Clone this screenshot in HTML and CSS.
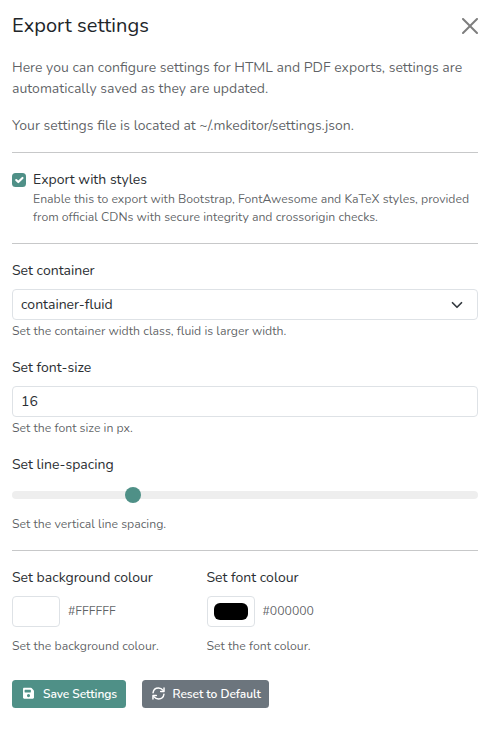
FILE: index.html
```
<!DOCTYPE html>
<html lang="en">
<head>
<meta charset="utf-8">
<title>Export settings</title>
<link rel="stylesheet" href="styles.css">
</head>
<body>
<main class="panel">
  <header class="head">
    <h5 class="title">Export settings</h5>
    <button class="close" aria-label="Close"><svg viewBox="0 0 16 16" width="16" height="16"><path d="M.293.293a1 1 0 0 1 1.414 0L8 6.586 14.293.293a1 1 0 1 1 1.414 1.414L9.414 8l6.293 6.293a1 1 0 0 1-1.414 1.414L8 9.414l-6.293 6.293a1 1 0 0 1-1.414-1.414L6.586 8 .293 1.707a1 1 0 0 1 0-1.414z"/></svg></button>
  </header>
  <p class="intro">Here you can configure settings for HTML and PDF exports, settings are automatically saved as they are updated.</p>
  <p class="intro">Your settings file is located at ~/.mkeditor/settings.json.</p>
  <hr>
  <div class="check">
    <span class="box"><svg viewBox="0 0 20 20" width="14" height="14"><path fill="none" stroke="#fff" stroke-linecap="round" stroke-linejoin="round" stroke-width="3" d="m6 10 3 3 6-6"/></svg></span>
    <div>
      <div class="label">Export with styles</div>
      <div class="help">Enable this to export with Bootstrap, FontAwesome and KaTeX styles, provided from official CDNs with secure integrity and crossorigin checks.</div>
    </div>
  </div>
  <hr>
  <section class="field">
    <div class="label">Set container</div>
    <div class="control">container-fluid<svg viewBox="0 0 16 16" width="14" height="12"><path fill="none" stroke="#343a40" stroke-linecap="round" stroke-linejoin="round" stroke-width="2.300" d="m2 5 6 6 6-6"/></svg></div>
    <div class="help">Set the container width class, fluid is larger width.</div>
  </section>
  <section class="field">
    <div class="label">Set font-size</div>
    <div class="control">16</div>
    <div class="help">Set the font size in px.</div>
  </section>
  <section class="field">
    <div class="label">Set line-spacing</div>
    <div class="range"><span class="thumb"></span></div>
    <div class="help">Set the vertical line spacing.</div>
  </section>
  <hr>
  <div class="colours">
    <section>
      <div class="label">Set background colour</div>
      <div class="pick"><span class="well"><span class="swatch white"></span></span><span class="help hex">#FFFFFF</span></div>
      <div class="help">Set the background colour.</div>
    </section>
    <section>
      <div class="label">Set font colour</div>
      <div class="pick"><span class="well"><span class="swatch black"></span></span><span class="help hex">#000000</span></div>
      <div class="help">Set the font colour.</div>
    </section>
  </div>
  <footer class="actions">
    <button class="btn save"><svg viewBox="0 0 448 512" width="11" height="12.500"><path fill="#fff" fill-rule="evenodd" d="M434 130l-84-84A48 48 0 0 0 316 32H48C21.500 32 0 53.500 0 80v352c0 26.500 21.500 48 48 48h352c26.500 0 48-21.500 48-48V164a48 48 0 0 0-14-34zM224 416a64 64 0 1 1 0-128 64 64 0 0 1 0 128zM320 128v80a16 16 0 0 1-16 16H80a16 16 0 0 1-16-16v-80a16 16 0 0 1 16-16h224a16 16 0 0 1 16 16z"/></svg>Save Settings</button>
    <button class="btn reset"><svg viewBox="0 0 512 512" width="13" height="13"><g fill="none" stroke="#fff" stroke-width="58" stroke-linecap="round" stroke-linejoin="round"><path d="M42 226C58 112 145 42 254 42c78 0 138 34 186 92M470 286c-16 114-103 184-212 184-78 0-138-34-186-92"/><path d="M474 42v132H342M38 470V338h132"/></g></svg>Reset to Default</button>
  </footer>
</main>
</body>
</html>
```
FILE: styles.css
```
* { box-sizing: border-box; }
body { margin: 0; background: #fff; color: #2a2e32; font: 400 14px/21px Nunito, "Nunito Sans", Lato, sans-serif; }
.panel { padding: 14px 15px 0 12px; }
svg { display: block; flex: none; }
.head { display: flex; justify-content: space-between; align-items: center; height: 24px; margin-bottom: 19px; }
.title { margin: 0; font-size: 20px; line-height: 24px; font-weight: 450; letter-spacing: .04px; color: #212529; }
.close { display: flex; padding: 0; border: 0; background: none; opacity: .5; }
.intro { margin: 0 0 16px; color: rgba(33, 37, 41, .72); }
hr { margin: 16px 0; border: 0; border-top: 1px solid #c7c8c9; }
.help { font-size: 12.25px; line-height: 18px; color: rgba(33, 37, 41, .72); }
.check { display: flex; gap: 7px; height: 58px; }
.box { flex: none; width: 14px; height: 14px; margin-top: 4px; border-radius: 3.5px; background: #4f9087; }
.field { margin-bottom: 17px; }
.control { display: flex; align-items: center; justify-content: space-between; height: 31px; margin: 8px 0 2px; padding: 0 13px 0 8px; border: 1px solid #dee2e6; border-radius: 4px; }
.range { display: flex; align-items: center; height: 8px; margin: 16px 0; padding-left: 113px; border-radius: 8px; background: #eee; }
.thumb { width: 16px; height: 16px; border-radius: 50%; background: #4f9087; }
.colours { display: grid; grid-template-columns: 194.5px 1fr; }
.pick { display: flex; align-items: center; gap: 8px; margin: 8px 0 10px; }
.well { display: flex; width: 48px; height: 31px; padding: 6px; border: 1px solid #dee2e6; border-radius: 4px; }
.swatch { flex: 1; border-radius: 6px; }
.hex { margin-top: -1px; }
.white { background: #fff; }
.black { background: #000; }
.actions { display: flex; gap: 16px; margin-top: 25px; }
.btn { display: flex; align-items: center; height: 28px; padding: 0 9px 0 11px; border: 0; border-radius: 3.5px; color: #fff; font: 600 12px/18px Nunito, "Nunito Sans", Lato, sans-serif; letter-spacing: -.06px; white-space: nowrap; }
.btn svg { margin-top: -2px; }
.save { width: 114px; gap: 9px; background: #4f9087; }
.reset { width: 127px; gap: 7.5px; padding-left: 10px; background: #6c757d; }
```
